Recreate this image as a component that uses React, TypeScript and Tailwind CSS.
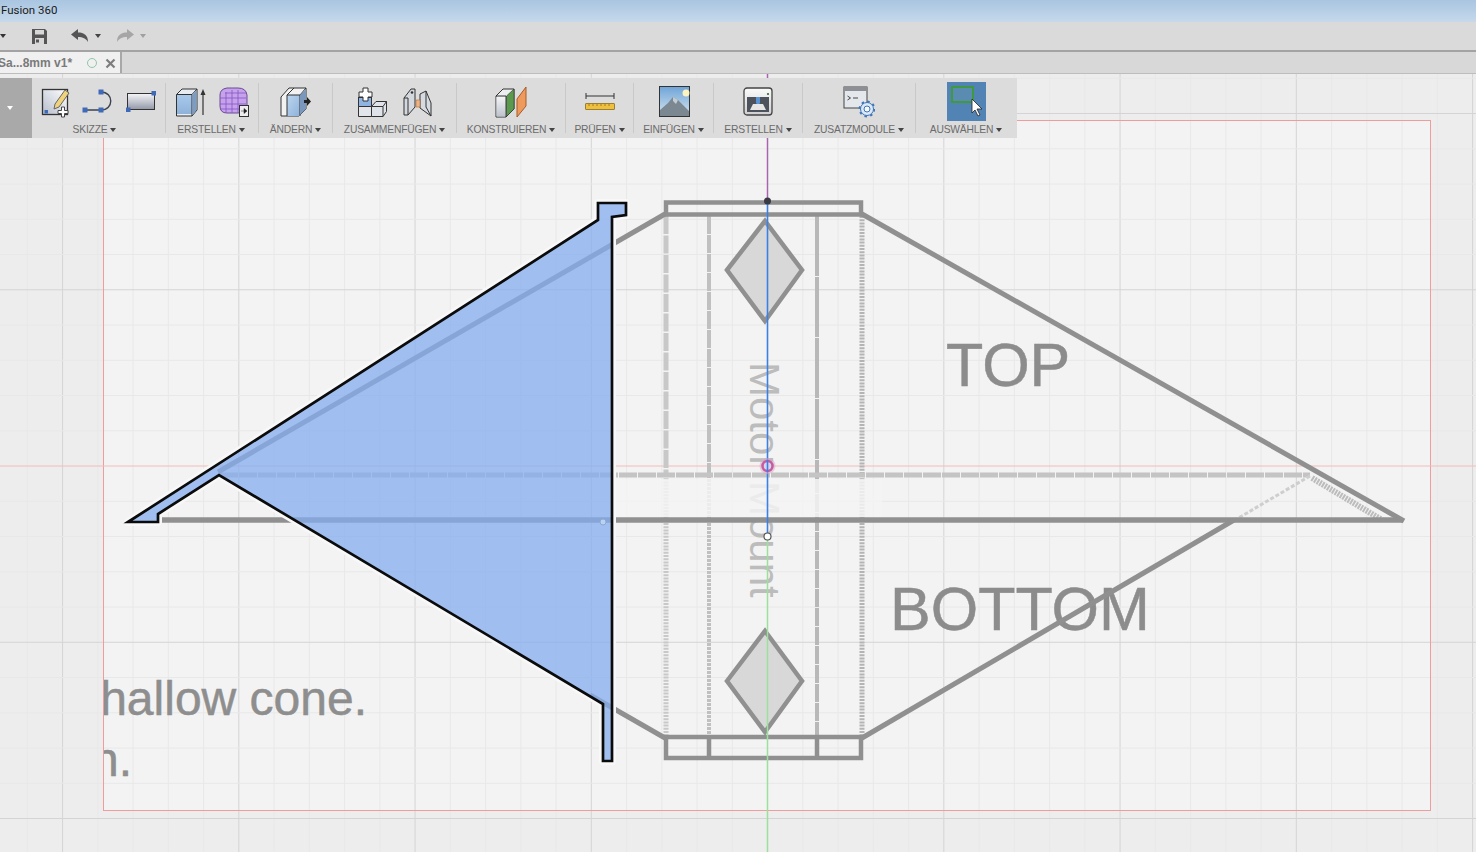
import React from 'react';

const minorX = Array.from({ length: 43 }, (_, i) => 27.3 + i * 35.25);
const minorY = Array.from({ length: 23 }, (_, i) => 43 + i * 35.25);

const profile = 'M128 522 L598 220 V203 H626 V215 L612 217 V761 H603 V704 L219 475 L158 514 V522 Z';

function Caret({ className = 'border-t-[#444]' }: { className?: string }) {
  return <span className={`inline-block w-0 h-0 border-x-[3.5px] border-x-transparent border-t-[4px] ${className}`} />;
}

function SketchIcon() {
  return (
    <svg width="30" height="32" viewBox="0 0 30 32">
      <defs>
        <linearGradient id="sk" x1="1" y1="0" x2="0" y2="1">
          <stop offset="0" stopColor="#ffffff" />
          <stop offset="1" stopColor="#b4bccb" />
        </linearGradient>
      </defs>
      <rect x="1.500" y="3.500" width="25" height="25" fill="url(#sk)" stroke="#333" strokeWidth="1.300" />
      <path d="M14 18 L24 4 L28 7 L18 21 L13 23 Z" fill="#f0d27a" stroke="#666" />
      <rect x="3.500" y="24" width="3.500" height="3.500" fill="#3f6ab8" />
      <path d="M20.500 21 h3 v3.500 h3.500 v3 h-3.500 v3.500 h-3 v-3.500 h-3.500 v-3 h3.500 z" fill="#fff" stroke="#444" />
    </svg>
  );
}

function SplineIcon() {
  return (
    <svg width="32" height="32" viewBox="0 0 32 32">
      <path d="M3 24 H19 C32 24 32 6 19 6" fill="none" stroke="#3c4250" strokeWidth="1.400" />
      <rect x="0.500" y="21.500" width="5" height="5" fill="#3f6ab8" />
      <rect x="16.500" y="21.500" width="5" height="5" fill="#3f6ab8" />
      <rect x="16.500" y="3.500" width="5" height="5" fill="#3f6ab8" />
    </svg>
  );
}

function RectIcon() {
  return (
    <svg width="32" height="24" viewBox="0 0 32 24">
      <defs>
        <linearGradient id="rc" x1="0" y1="0" x2="0" y2="1">
          <stop offset="0" stopColor="#f6f7f8" />
          <stop offset="1" stopColor="#9298a8" />
        </linearGradient>
      </defs>
      <rect x="2.500" y="3.500" width="27" height="16" fill="url(#rc)" stroke="#333" />
      <rect x="26.500" y="1" width="4.500" height="4.500" fill="#3f6ab8" />
      <rect x="1" y="17.500" width="4.500" height="4.500" fill="#3f6ab8" />
    </svg>
  );
}

function ExtrudeIcon() {
  return (
    <svg width="31" height="32" viewBox="0 0 31 32">
      <defs>
        <linearGradient id="ex" x1="0" y1="0" x2="0" y2="1">
          <stop offset="0" stopColor="#a9c9ec" />
          <stop offset="1" stopColor="#8fb2da" />
        </linearGradient>
      </defs>
      <path d="M1.500 8.500 L7 3 H22 V24 L17 30 H1.500 Z" fill="#e8edf2" stroke="#333" />
      <rect x="2" y="9" width="15" height="19" fill="url(#ex)" />
      <path d="M1.500 8.500 H17 V30 M17 8.500 L22 3" fill="none" stroke="#333" />
      <path d="M17.500 9 L21.500 4 V24 L17.500 29 Z" fill="#7d9cc4" />
      <path d="M28 29 V6" stroke="#333" strokeWidth="1.200" />
      <path d="M25.500 9 L28 3 L30.500 9 Z" fill="#333" />
    </svg>
  );
}

function FormIcon() {
  return (
    <svg width="32" height="32" viewBox="0 0 32 32">
      <path d="M2 9 Q2 3 9 2 H20 Q28 2 29 9 V20 Q28 27 20 27 H9 Q2 27 2 20 Z" fill="#c6a2ea" stroke="#6b4a96" />
      <path d="M2 12 H28 M2 18 H28 M2 23 H26 M8 6 V27 M14 4 V27 M20 4 V27 M7 7 H28" stroke="#8653c8" strokeWidth="0.800" fill="none" />
      <rect x="21.500" y="19.500" width="9" height="11" fill="#ededed" stroke="#333" />
      <path d="M23 25 H26 V22.500 L29 25 L26 27.500 V25" fill="#222" stroke="#222" strokeWidth="0.500" />
    </svg>
  );
}

function ModifyIcon() {
  return (
    <svg width="31" height="32" viewBox="0 0 31 32">
      <defs>
        <linearGradient id="md" x1="0" y1="0" x2="1" y2="1">
          <stop offset="0" stopColor="#bcd6f0" />
          <stop offset="1" stopColor="#8fb2da" />
        </linearGradient>
      </defs>
      <path d="M1 11 L9 2 H26 V23 L19 30 H1 Z" fill="#f2f2f2" stroke="#333" />
      <path d="M7 9 H20 V30 H7 Z" fill="url(#md)" />
      <path d="M7 30 V9 L14 2 M7 9 H20 V30 M20 9 L26 2" fill="none" stroke="#333" />
      <path d="M20 9 L26 3 V23 L20 29 Z" fill="#7b97bb" />
      <path d="M24 14 H27 V11 L31 15.500 L27 20 V17 H24 Z" fill="#222" />
    </svg>
  );
}

function JoinIcon() {
  return (
    <svg width="30" height="32" viewBox="0 0 30 32">
      <rect x="1.500" y="11.500" width="13" height="9" fill="#8fb4e4" stroke="#333" />
      <path d="M1.500 20.500 H14.500 V30.500 H1.500 Z" fill="#e2e5ea" stroke="#333" />
      <path d="M14.500 20.500 L19 15.500 H29.500 V25.500 L26 30.500 H14.500 Z" fill="#dfe3ea" stroke="#333" />
      <path d="M14.500 20.500 H26 V30.500 M26 20.500 L29.500 15.500" fill="none" stroke="#333" />
      <path d="M6 2 h5 v4 h4 v5 h-4 v4 h-5 v-4 h-4 v-5 h4 z" fill="#fff" stroke="#333" />
    </svg>
  );
}

function JointIcon() {
  return (
    <svg width="30" height="32" viewBox="0 0 30 32">
      <path d="M2 12 L9 3 H13 V21 L6 29 H2 Z" fill="#d4d9e0" stroke="#333" />
      <path d="M2 12 H6 V29" fill="none" stroke="#333" />
      <circle cx="10" cy="6.500" r="1.300" fill="#333" />
      <path d="M18 8 L24 5 L29 17 V30 L18 22 Z" fill="#d6dbe2" stroke="#333" />
      <path d="M24 5 V21 L29 30" fill="none" stroke="#333" />
      <rect x="14" y="14" width="4" height="7" fill="#e8b58c" stroke="#b86a2e" strokeWidth="0.600" />
    </svg>
  );
}

function ConstructIcon() {
  return (
    <svg width="32" height="32" viewBox="0 0 32 32">
      <defs>
        <linearGradient id="cn" x1="0" y1="0" x2="0" y2="1">
          <stop offset="0" stopColor="#f4f4f6" />
          <stop offset="1" stopColor="#bcc2cc" />
        </linearGradient>
      </defs>
      <path d="M1 10 L8 3 H19 V23 L11 31 H1 Z" fill="#eceef0" stroke="#333" />
      <path d="M1.500 11 H10.500 V30.500 H1.500 Z" fill="url(#cn)" />
      <path d="M1 10 H11 V31" fill="none" stroke="#333" />
      <path d="M11.500 10 L19 3 V23 L11.500 30.500 Z" fill="#5a9a4e" stroke="#333" strokeWidth="0.600" />
      <path d="M22 13 L31 1 V20 L22 31 Z" fill="#ee9a5c" stroke="#a85a26" />
    </svg>
  );
}

function InspectIcon() {
  return (
    <svg width="30" height="24" viewBox="0 0 30 24">
      <path d="M1 6 H29 M1 3 V9 M29 3 V9" stroke="#333" strokeWidth="1" fill="none" />
      <rect x="0.500" y="13.500" width="29" height="6" rx="0.500" fill="#efc040" stroke="#9a8030" />
      <path d="M4 14 V16 M8 14 V16 M12 14 V16 M16 14 V16 M20 14 V16 M24 14 V16" stroke="#8a6d16" strokeWidth="0.800" />
    </svg>
  );
}

function InsertIcon() {
  return (
    <svg className="ml-[2px]" width="31" height="32" viewBox="0 0 31 32">
      <defs>
        <linearGradient id="sky" x1="0" y1="0" x2="0" y2="1">
          <stop offset="0" stopColor="#6ea4d8" />
          <stop offset="1" stopColor="#d8e6ee" />
        </linearGradient>
      </defs>
      <rect x="0.500" y="0.500" width="30" height="30" fill="url(#sky)" stroke="#333" />
      <circle cx="27" cy="7" r="3.500" fill="#fbf3c0" />
      <path d="M1 30 V24 L9 17 L14 11 L19 14 L30 25 V30 Z" fill="#7b8791" />
      <path d="M14 11 L19 14 L17 18 L14 15 Z" fill="#c4ccd2" />
    </svg>
  );
}

function MakeIcon() {
  return (
    <svg width="30" height="30" viewBox="0 0 30 30">
      <defs>
        <linearGradient id="mk" x1="0" y1="0" x2="0" y2="1">
          <stop offset="0" stopColor="#fbfbfb" />
          <stop offset="1" stopColor="#cfcfd2" />
        </linearGradient>
      </defs>
      <rect x="1" y="1" width="28" height="27" rx="3" fill="url(#mk)" stroke="#444" strokeWidth="1.300" />
      <circle cx="25" cy="7" r="1.100" fill="#2a6a3a" />
      <rect x="4" y="10" width="22" height="15" fill="#4d535d" />
      <path d="M13 10 H17 V16 L15 19 L13 16 Z" fill="#5a94d4" />
      <path d="M7 23 L10 17 H20 L23 23 Z" fill="#e6e6e6" />
    </svg>
  );
}

function AddinIcon() {
  return (
    <svg width="32" height="32" viewBox="0 0 32 32">
      <rect x="1" y="1" width="23" height="21" fill="#e4e7ec" stroke="#444" />
      <rect x="1" y="1" width="23" height="4" fill="#8d8f94" />
      <path d="M4.500 10 L7.500 12 L4.500 14 M10 12 H15" stroke="#333" strokeWidth="0.900" fill="none" />
      <circle cx="24" cy="23" r="6.500" fill="#dbe8f6" stroke="#3f74b8" strokeWidth="1" />
      <circle cx="24" cy="23" r="7.500" fill="none" stroke="#3f74b8" strokeWidth="1.800" strokeDasharray="2.500 3.390" />
      <circle cx="24" cy="23" r="3" fill="#f6f9fc" stroke="#3f74b8" strokeWidth="1" />
    </svg>
  );
}

function SelectTile() {
  return (
    <div className="relative flex h-[39px] w-[39px] justify-center bg-[#5183b5]">
      <svg width="39" height="39" viewBox="0 0 39 39">
        <rect x="5" y="5" width="21" height="15" fill="#5a8bb0" stroke="#3f9a3f" strokeWidth="2" />
        <path d="M25 17 V31 L28 28 L31 34 L33 33 L30 27 L35 27 Z" fill="#fff" stroke="#222" strokeWidth="0.800" />
      </svg>
    </div>
  );
}

type Group = { label: string; width: string; gap: string; icons: React.ReactNode; shift?: string };

const groups: Group[] = [
  { label: 'SKIZZE', width: 'w-[133px]', gap: 'gap-[11px]', shift: 'mr-[8px]', icons: <><SketchIcon /><SplineIcon /><RectIcon /></> },
  { label: 'ERSTELLEN', width: 'w-[92px]', gap: 'gap-[12px]', shift: 'mr-[2px]', icons: <><ExtrudeIcon /><FormIcon /></> },
  { label: 'ÄNDERN', width: 'w-[73px]', gap: 'gap-0', icons: <ModifyIcon /> },
  { label: 'ZUSAMMENFÜGEN', width: 'w-[123px]', gap: 'gap-[15px]', icons: <><JoinIcon /><JointIcon /></> },
  { label: 'KONSTRUIEREN', width: 'w-[108px]', gap: 'gap-0', icons: <ConstructIcon /> },
  { label: 'PRÜFEN', width: 'w-[67px]', gap: 'gap-0', icons: <InspectIcon /> },
  { label: 'EINFÜGEN', width: 'w-[79px]', gap: 'gap-0', icons: <InsertIcon /> },
  { label: 'ERSTELLEN', width: 'w-[88px]', gap: 'gap-0', icons: <MakeIcon /> },
  { label: 'ZUSATZMODULE', width: 'w-[112px]', gap: 'gap-0', icons: <AddinIcon /> },
  { label: 'AUSWÄHLEN', width: 'w-[100px]', gap: 'gap-0', icons: <SelectTile /> },
];

function Toolbar() {
  return (
    <div className="absolute left-0 top-[4px] flex h-[60px] w-[1017px] bg-[#dcdcdc]">
      <div className="flex w-[32px] items-center justify-end pr-[19px] bg-[#a9a9a9]">
        <Caret className="border-t-white" />
      </div>
      {groups.map((g, i) => (
        <React.Fragment key={i}>
          <div className={`flex flex-col items-center pt-[4px] ${g.width}`}>
            <div className={`flex h-[39px] items-center justify-center ${g.gap}`}>{g.icons}</div>
            <div className={`mt-[2px] flex h-[14px] items-center gap-[3px] text-[10.3px] tracking-[-0.2px] text-[#6b6b6b] whitespace-nowrap ${g.shift ?? ''}`}>
              {g.label}
              <Caret />
            </div>
          </div>
          {i < groups.length - 1 && <div className="my-[5px] w-px bg-[#c9c9c9]" />}
        </React.Fragment>
      ))}
    </div>
  );
}

function Drawing() {
  const gray = '#909090';
  const hidden = [
    { x: 666, w: 5, c: '#c8c8c8', a: '18 1.500', b: '2 1.200' },
    { x: 709, w: 4, c: '#c0c0c0', a: '18 1', b: '3 1' },
    { x: 817, w: 4, c: '#b8b8b8', a: '60 1', b: '18 1' },
    { x: 862, w: 5, c: '#b4b4b4', a: '2 1.200', b: '2 1.200' },
  ];
  return (
    <svg className="absolute inset-0" width="1476" height="778" viewBox="0 74 1476 778">
      <defs>
        <clipPath id="sheet">
          <rect x="104" y="121" width="1326" height="690" />
        </clipPath>
        <mask id="outside" maskUnits="userSpaceOnUse" x="0" y="74" width="1476" height="778">
          <rect x="0" y="74" width="1476" height="778" fill="#fff" />
          <path d={profile} fill="#000" />
        </mask>
      </defs>
      <rect x="103.500" y="120.500" width="1327" height="690" fill="#f3f3f3" />
      {minorX.map((x, i) =>
        i === 21 ? null : <line key={i} x1={x} y1="74" x2={x} y2="852" stroke={i % 5 === 1 ? '#d4d4d4' : '#e8e8e8'} />
      )}
      {minorY.map((y, i) =>
        i === 12 ? null : <line key={i} x1="0" y1={y} x2="1476" y2={y} stroke={i % 5 === 2 ? '#d4d4d4' : '#e8e8e8'} />
      )}

      <rect x="103.500" y="120.500" width="1327" height="690" fill="none" stroke="#ee9c9c" />
      <line x1="0" y1="466" x2="1476" y2="466" stroke="#f3bcbc" />

      {/* sketch text */}
      <text x="946" y="386" fontFamily="Liberation Sans" fontSize="61" fill="#8c8c8c" stroke="#8c8c8c" strokeWidth="0.500">TOP</text>
      <text x="890" y="630" fontFamily="Liberation Sans" fontSize="61" fill="#8c8c8c" stroke="#8c8c8c" strokeWidth="0.500">BOTTOM</text>
      <g clipPath="url(#sheet)">
        <text x="367" y="715" textAnchor="end" fontFamily="Liberation Sans" fontSize="48" fill="#8e8e8e" stroke="#8e8e8e" strokeWidth="0.500">hallow cone.</text>
        <text x="132" y="776" textAnchor="end" fontFamily="Liberation Sans" fontSize="48" fill="#8e8e8e" stroke="#8e8e8e" strokeWidth="0.500">n.</text>
      </g>
      <text transform="translate(750 362) rotate(90)" fontFamily="Liberation Sans" fontSize="42" fill="#bcbcbc">Motor Mount</text>

      {/* hidden edges */}
      {hidden.map((l) => (
        <React.Fragment key={l.x}>
          <line x1={l.x} y1="216" x2={l.x} y2="475" stroke={l.c} strokeWidth={l.w} strokeDasharray={l.a} />
          <line x1={l.x} y1="475" x2={l.x} y2="736" stroke={l.c} strokeWidth={l.w} strokeDasharray={l.b} />
        </React.Fragment>
      ))}
      <rect x="612" y="479" width="270" height="38" fill="#f3f3f3" opacity="0.85" />
      <line x1="220" y1="475" x2="1310" y2="475" stroke="#c4c4c4" strokeWidth="5" strokeDasharray="18 1" />
      <line x1="1310" y1="476" x2="1235" y2="520" stroke="#cecece" strokeWidth="3" strokeDasharray="4 2" />
      <line x1="1312" y1="478" x2="1382" y2="520" stroke="#bcbcbc" strokeWidth="6" strokeDasharray="2 1" />

      {/* visible sketch outline */}
      <rect x="666" y="202.500" width="195" height="12" fill="none" stroke={gray} strokeWidth="4.500" />
      <path d="M666 737 H861 V758 H666 Z M709 737 V758 M817 737 V758" fill="none" stroke={gray} strokeWidth="4.500" />
      <path d="M727 270 L765 221 L802 270 L765 321 Z" fill="#d8d8d8" stroke={gray} strokeWidth="4.500" />
      <path d="M727 681 L765 631 L802 681 L765 732 Z" fill="#d8d8d8" stroke={gray} strokeWidth="4.500" />
      <line x1="665" y1="214" x2="218" y2="472" stroke={gray} strokeWidth="5" />
      <line x1="862" y1="214" x2="1404" y2="521" stroke={gray} strokeWidth="5" />
      <line x1="862" y1="738" x2="1234" y2="520" stroke={gray} strokeWidth="5" />
      <line x1="665" y1="738" x2="590" y2="695" stroke={gray} strokeWidth="5" />
      <line x1="158" y1="520" x2="1402" y2="520" stroke={gray} strokeWidth="5.500" />

      {/* selected profile */}
      <path d={profile} fill="#84aeef" fillOpacity="0.75" />
      <path d={profile} fill="none" stroke="#f8f8f8" strokeWidth="8" strokeLinejoin="round" mask="url(#outside)" />
      <path d={profile} fill="none" stroke="#0b0b0b" strokeWidth="2.700" />

      {/* axes and points */}
      <line x1="767.500" y1="74" x2="767.500" y2="201" stroke="#a864ac" strokeWidth="1.500" />
      <line x1="767.500" y1="201" x2="767.500" y2="536" stroke="#3a80e8" strokeWidth="1.600" />
      <line x1="767.500" y1="536" x2="767.500" y2="852" stroke="#9be09b" strokeWidth="1.500" />
      <circle cx="767.500" cy="201" r="3.500" fill="#3a3a44" />
      <circle cx="767.500" cy="466" r="8" fill="#d8a8c8" opacity="0.5" />
      <circle cx="767.500" cy="466" r="5" fill="#d6d6ea" stroke="#c75aa0" strokeWidth="2.500" />
      <line x1="767.500" y1="460" x2="767.500" y2="472" stroke="#3a80e8" strokeWidth="1.600" />
      <circle cx="767.500" cy="536.500" r="3.500" fill="#ffffff" stroke="#555" strokeWidth="1.200" />
      <circle cx="603" cy="522" r="3" fill="#bcd0f0" stroke="#8aa8d8" />
    </svg>
  );
}

export default function App() {
  return (
    <div className="flex h-[852px] w-[1476px] flex-col overflow-hidden bg-[#ededed] font-['Liberation_Sans',sans-serif]">
      {/* title bar */}
      <div className="flex h-[22px] items-center bg-gradient-to-b from-[#a9c5e0] to-[#c6d9ec] pl-[1px] font-['Roboto',sans-serif] text-[11.500px] text-[#1a1a1a]">
        Fusion 360
      </div>

      {/* quick access */}
      <div className="flex h-[30px] items-center border-b-2 border-[#a3a3a3] bg-[#dadada]">
        <Caret className="border-t-[#333]" />
        <svg className="ml-[25px]" width="17" height="17" viewBox="0 0 17 17">
          <path d="M1 1 H14 L16 3 V16 H1 Z" fill="#555" />
          <rect x="4" y="2" width="9" height="4.500" fill="#d8d8d8" />
          <rect x="4" y="10" width="9" height="6" fill="#d8d8d8" />
          <rect x="5" y="11.500" width="3" height="3" fill="#555" />
        </svg>
        <svg className="ml-[23px]" width="18" height="14" viewBox="0 0 18 14">
          <path d="M0 5.500 L7 0 V3.500 C13 3.500 17 6 17 13 C15 9.500 12 8 7 8 V11 Z" fill="#555" />
        </svg>
        <Caret className="ml-[6px] border-t-[#444]" />
        <svg className="ml-[15px]" width="18" height="14" viewBox="0 0 18 14">
          <path d="M18 5.500 L11 0 V3.500 C5 3.500 1 6 1 13 C3 9.500 6 8 11 8 V11 Z" fill="#a6a6a6" />
        </svg>
        <Caret className="ml-[6px] border-t-[#a0a0a0]" />
      </div>

      {/* document tabs */}
      <div className="flex h-[22px] border-b border-[#bdbdbd] bg-[#d8d8d8]">
        <div className="flex w-[122px] items-center overflow-hidden whitespace-nowrap border-r-2 border-[#a8a8a8] bg-[#f0f0f0] pt-[1px] text-[12px] font-bold text-[#7a7a7a]">
          <span className="ml-[-2px]">Sa...8mm v1*</span>
          <span className="ml-[15px] h-[10px] w-[10px] shrink-0 rounded-full border border-[#8fc7a8]" />
          <svg className="ml-[8px] shrink-0" width="11" height="11" viewBox="0 0 11 11">
            <path d="M1.500 1.500 L9.500 9.500 M9.500 1.500 L1.500 9.500" stroke="#7d7d7d" strokeWidth="2.200" />
          </svg>
        </div>
      </div>

      {/* canvas */}
      <div className="relative flex-1">
        <Drawing />
        <Toolbar />
      </div>
    </div>
  );
}
